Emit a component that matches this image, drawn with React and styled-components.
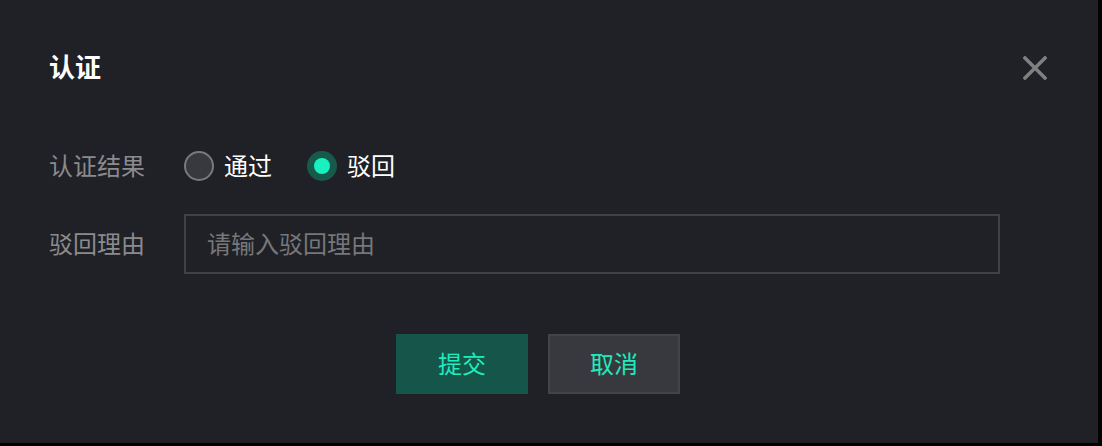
import React, { useState } from 'react';
import styled, { createGlobalStyle } from 'styled-components';

const GlobalStyle = createGlobalStyle`
  html, body {
    margin: 0;
    padding: 0;
    background: #000000;
  }
  body {
    font-family: "Noto Sans CJK SC", "Noto Sans", sans-serif;
  }
`;

const ACCENT = '#1eecbd';

const Dialog = styled.div`
  width: 1098px;
  height: 443px;
  box-sizing: border-box;
  background: #202126;
  padding: 48px 51px 0 49px;
  display: flex;
  flex-direction: column;
`;

const Header = styled.div`
  display: flex;
  align-items: center;
  justify-content: space-between;
  height: 40px;
`;

const Title = styled.div`
  font-size: 26px;
  font-weight: 700;
  color: #ffffff;
  line-height: 36px;
  padding-bottom: 4px;
`;

const CloseButton = styled.button`
  width: 24px;
  height: 24px;
  padding: 0;
  border: none;
  background: transparent;
  display: flex;
  align-items: center;
  justify-content: center;
  cursor: pointer;
`;

const Form = styled.div`
  margin-top: 48px;
  display: flex;
  flex-direction: column;
  gap: 18px;
`;

const Row = styled.div`
  display: flex;
  align-items: center;
  height: 60px;
`;

const Label = styled.div`
  width: 135px;
  flex: none;
  font-size: 24px;
  line-height: 30px;
  padding-bottom: 3px;
  color: #8b8b8e;
`;

const RadioGroup = styled.div`
  display: flex;
  align-items: center;
  gap: 35px;
`;

const RadioItem = styled.label`
  display: flex;
  align-items: center;
  gap: 10px;
  cursor: pointer;
  font-size: 24px;
  color: #ffffff;
`;

const RadioText = styled.span`
  line-height: 30px;
  padding-bottom: 3px;
`;

const RadioCircle = styled.span`
  width: 30px;
  height: 30px;
  box-sizing: border-box;
  border-radius: 50%;
  display: flex;
  align-items: center;
  justify-content: center;
  border: ${props => props.checked ? 'none' : '2px solid #7a7a7d'};
  background: ${props => props.checked ? '#175a4c' : '#38393e'};
  &::after {
    content: '';
    display: ${props => props.checked ? 'block' : 'none'};
    width: 16px;
    height: 16px;
    border-radius: 50%;
    background: #19f0c0;
  }
`;

const Input = styled.input`
  width: 816px;
  height: 60px;
  box-sizing: border-box;
  border: 2px solid #404146;
  background: transparent;
  padding: 0 21px 4px;
  font-family: inherit;
  font-size: 24px;
  color: #ffffff;
  outline: none;
  &::placeholder {
    color: #77777a;
  }
`;

const Footer = styled.div`
  margin-top: 60px;
  display: flex;
  justify-content: center;
  gap: 20px;
  padding-right: 20px;
`;

const Button = styled.button`
  width: 132px;
  height: 60px;
  box-sizing: border-box;
  padding: 0 0 4px;
  font-family: inherit;
  font-size: 24px;
  color: ${ACCENT};
  cursor: pointer;
  background: ${props => props.primary ? '#15554a' : '#38393e'};
  border: ${props => props.primary ? 'none' : '2px solid #434449'};
`;

function App() {
  const [result, setResult] = useState('reject');
  const [reason, setReason] = useState('');

  return (
    <>
      <GlobalStyle />
      <Dialog>
        <Header>
          <Title>认证</Title>
          <CloseButton aria-label="关闭">
            <svg width="24" height="24" viewBox="0 0 24 24">
              <path d="M2 2 L22 22 M22 2 L2 22" stroke="#808083" strokeWidth="3.5" strokeLinecap="square" />
            </svg>
          </CloseButton>
        </Header>
        <Form>
          <Row>
            <Label>认证结果</Label>
            <RadioGroup>
              <RadioItem onClick={() => setResult('pass')}>
                <RadioCircle checked={result === 'pass'} />
                <RadioText>通过</RadioText>
              </RadioItem>
              <RadioItem onClick={() => setResult('reject')}>
                <RadioCircle checked={result === 'reject'} />
                <RadioText>驳回</RadioText>
              </RadioItem>
            </RadioGroup>
          </Row>
          <Row>
            <Label>驳回理由</Label>
            <Input
              placeholder="请输入驳回理由"
              value={reason}
              onChange={e => setReason(e.target.value)}
            />
          </Row>
        </Form>
        <Footer>
          <Button primary>提交</Button>
          <Button>取消</Button>
        </Footer>
      </Dialog>
    </>
  );
}

export default App;
